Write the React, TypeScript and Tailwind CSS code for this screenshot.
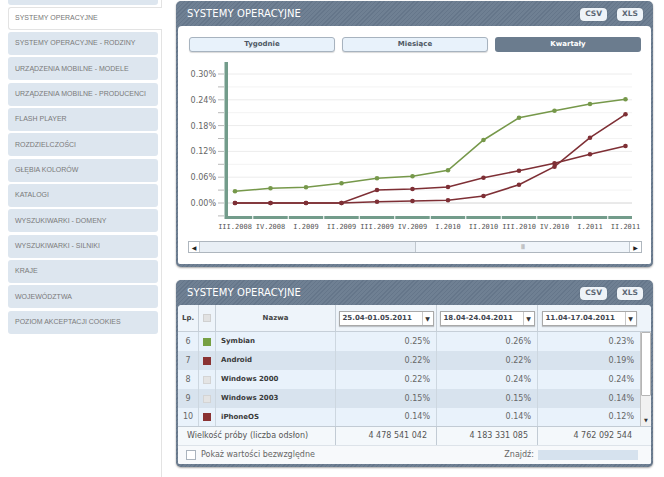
import React from "react";

const sidebarItems = [
  "SYSTEMY OPERACYJNE - RODZINY",
  "URZĄDZENIA MOBILNE - MODELE",
  "URZĄDZENIA MOBILNE - PRODUCENCI",
  "FLASH PLAYER",
  "ROZDZIELCZOŚCI",
  "GŁĘBIA KOLORÓW",
  "KATALOGI",
  "WYSZUKIWARKI - DOMENY",
  "WYSZUKIWARKI - SILNIKI",
  "KRAJE",
  "WOJEWÓDZTWA",
  "POZIOM AKCEPTACJI COOKIES",
];

const HATCH =
  "bg-[#68798b] bg-[repeating-linear-gradient(135deg,#65768a_0px,#65768a_1px,#6f8093_1px,#6f8093_3px)]";

const xs = [235, 270.5, 306, 341.5, 377, 412.5, 448, 483.5, 519, 554.5, 590, 625.5];
const cats = ["III.2008", "IV.2008", "I.2009", "II.2009", "III.2009", "IV.2009", "I.2010", "II.2010", "III.2010", "IV.2010", "I.2011", "II.2011"];
const green = [190.3, 187.3, 186.3, 182.3, 177.3, 175.3, 169.3, 139, 116.7, 109.7, 103, 98.3];
const red1 = [202, 202, 202, 202, 189, 188, 186, 176.7, 169.7, 162.3, 153.3, 145];
const red2 = [202, 202, 202, 202, 200.7, 200, 199.3, 195, 183.7, 165.7, 136.7, 113.3];

const majors = [73, 98.8, 124.6, 150.4, 176.2, 202];
const labels = ["0.30%", "0.24%", "0.18%", "0.12%", "0.06%", "0.00%"];

function Series({ ys, color }: { ys: number[]; color: string }) {
  const pts = xs.map((x, i) => `${x},${ys[i]}`).join(" ");
  return (
    <g>
      <polyline points={pts} fill="none" stroke={color} strokeWidth={1.6} />
      {xs.map((x, i) => (
        <circle key={i} cx={x} cy={ys[i]} r={2.3} fill={color} />
      ))}
    </g>
  );
}

function Chart() {
  const minors = majors.map((y) => y + 12.9);
  return (
    <svg width={460} height={182} viewBox="186 56 460 182" className="block ml-[8px] mt-[5px]">
      {majors.map((y) => (
        <line key={"g" + y} x1={228} x2={632} y1={y} y2={y} stroke={y === 202 ? "#d4d4d4" : "#ececec"} strokeWidth={1} />
      ))}
      {minors.slice(0, 5).map((y) => (
        <line key={"m" + y} x1={228} x2={632} y1={y} y2={y} stroke="#f3f3f3" strokeWidth={1} />
      ))}
      {[...majors, ...minors].map((y) => (
        <line key={"t" + y} x1={218} x2={224} y1={y} y2={y} stroke="#b9b9b9" strokeWidth={1} />
      ))}
      {labels.map((l, i) => (
        <text key={l} x={216} y={majors[i] + 3} textAnchor="end" fontSize={8} fill="#666" fontFamily="'DejaVu Sans', sans-serif">
          {l}
        </text>
      ))}
      <rect x={224.5} y={61} width={3.5} height={157} fill="#739c8b" />
      {xs.map((x, i) => {
        const a = i === 0 ? 225 : x - 17.2;
        const b = i === xs.length - 1 ? 632 : x + 17.2;
        return <rect key={"s" + i} x={a} y={215} width={b - a} height={3} fill="#739c8b" />;
      })}
      {cats.map((c, i) => (
        <text key={c} x={xs[i]} y={227.5} textAnchor="middle" fontSize={7} fill="#555" fontFamily="'DejaVu Sans Mono', monospace">
          {c}
        </text>
      ))}
      <Series ys={red2} color="#7e2f35" />
      <Series ys={red1} color="#7e2f35" />
      <Series ys={green} color="#76984a" />
    </svg>
  );
}

function SmallBtn({ label }: { label: string }) {
  return (
    <div className="h-[13px] px-[5px] flex items-center justify-center rounded-[4px] bg-[#eef3f8] text-[7.5px] font-bold text-[#5b6673] shadow-[0_0_1px_rgba(0,0,0,0.3)]">
      {label}
    </div>
  );
}

function PanelHeader() {
  return (
    <div className="h-[25px] flex items-center justify-between pl-[9px] pr-[8px]">
      <span className="text-[10px] text-white tracking-[0.1px]">SYSTEMY OPERACYJNE</span>
      <div className="flex gap-[10px] items-center mt-[1px]">
        <SmallBtn label="CSV" />
        <SmallBtn label="XLS" />
      </div>
    </div>
  );
}

function Tab({ label, active }: { label: string; active?: boolean }) {
  return active ? (
    <div className="w-[146px] h-[15px] rounded-[3px] bg-[#6b7c8e] flex items-center justify-center text-[7px] font-bold text-white">
      {label}
    </div>
  ) : (
    <div className="w-[146px] h-[15px] rounded-[3px] bg-[#e8f2fb] border border-[#a7b3bf] shadow-[0_1px_1px_rgba(0,0,0,0.15)] flex items-center justify-center text-[7px] font-bold text-[#4e5864]">
      {label}
    </div>
  );
}

function DateSelect({ label }: { label: string }) {
  return (
    <div className="mx-auto w-[95px] h-[15px] bg-white border border-[#a9a9a9] shadow-[0_1px_1px_rgba(0,0,0,0.2)] flex items-center">
      <span className="flex-1 pl-[3px] text-[7px] font-bold text-[#3f4650]">{label}</span>
      <span className="w-[11px] h-full border-l border-[#c8c8c8] flex items-center justify-center text-[6px] text-[#333]">▼</span>
    </div>
  );
}

const rows = [
  { lp: "6", name: "Symbian", color: "bg-[#76a043]", v: ["0.25%", "0.26%", "0.23%"] },
  { lp: "7", name: "Android", color: "bg-[#8a3232]", v: ["0.22%", "0.22%", "0.19%"] },
  { lp: "8", name: "Windows 2000", color: "", v: ["0.22%", "0.24%", "0.24%"] },
  { lp: "9", name: "Windows 2003", color: "", v: ["0.15%", "0.15%", "0.14%"] },
  { lp: "10", name: "iPhoneOS", color: "bg-[#8a3232]", v: ["0.14%", "0.14%", "0.12%"] },
];

function Table() {
  return (
    <div className="grid grid-cols-[21px_17px_120px_101px_101px_102px_11px] grid-rows-[27px_19px_19px_19px_19px_18px_19px_19px] text-[8px] text-[#666]">
      {/* header */}
      <div className="bg-[#eef4fa] border-b border-r border-[#c6cfd8] flex items-center justify-center text-[7px] font-bold text-[#444]">Lp.</div>
      <div className="bg-[#eef4fa] border-b border-r border-[#c6cfd8] flex items-center justify-center">
        <div className="w-[8px] h-[8px] bg-[#e2e2e2] border border-[#d0d0d0]" />
      </div>
      <div className="bg-[#eef4fa] border-b border-r border-[#c6cfd8] flex items-center justify-center text-[7px] font-bold text-[#444]">Nazwa</div>
      <div className="bg-[#eef4fa] border-b border-r border-[#c6cfd8] flex items-center">
        <DateSelect label="25.04-01.05.2011" />
      </div>
      <div className="bg-[#eef4fa] border-b border-r border-[#c6cfd8] flex items-center">
        <DateSelect label="18.04-24.04.2011" />
      </div>
      <div className="bg-[#eef4fa] border-b border-[#c6cfd8] flex items-center">
        <DateSelect label="11.04-17.04.2011" />
      </div>
      <div className="bg-[#eef4fa] border-b border-[#c6cfd8]" />

      {rows.map((r, i) => {
        const bg = i % 2 === 1 ? "bg-[#d8e3ee]" : "bg-[#e9f2fb]";
        return (
          <React.Fragment key={r.lp}>
            <div className={`${bg} border-r border-[#cdd7e0] flex items-center justify-center text-[#666]`} style={{ gridRow: i + 2, gridColumn: 1 }}>
              {r.lp}
            </div>
            <div className={`${bg} border-r border-[#cdd7e0] flex items-center justify-center`} style={{ gridRow: i + 2, gridColumn: 2 }}>
              {r.color ? (
                <div className={`w-[8px] h-[8px] ${r.color}`} />
              ) : (
                <div className="w-[8px] h-[8px] bg-[#e4e4e4] border border-[#d4d4d4]" />
              )}
            </div>
            <div className={`${bg} border-r border-[#cdd7e0] flex items-center pl-[5px] text-[7px] font-bold text-[#3a3a3a]`} style={{ gridRow: i + 2, gridColumn: 3 }}>
              {r.name}
            </div>
            {r.v.map((v, j) => (
              <div
                key={j}
                className={`${bg} ${j < 2 ? "border-r border-[#cdd7e0]" : ""} flex items-center justify-end pr-[6px]`}
                style={{ gridRow: i + 2, gridColumn: 4 + j }}
              >
                {v}
              </div>
            ))}
          </React.Fragment>
        );
      })}

      {/* scrollbar */}
      <div className="row-start-2 row-span-5 col-start-7 bg-[#f1f1f1] border-l border-[#c4c4c4] flex flex-col">
        <div className="h-[64px] bg-white border border-[#b5b5b5] rounded-[1px]" />
        <div className="flex-1" />
        <div className="h-[10px] flex items-center justify-center text-[5px] text-[#333]">▼</div>
      </div>

      {/* sample size */}
      <div className="row-start-7 col-start-1 col-span-3 bg-[#f4f8fb] border-t border-r border-[#c2cbd4] flex items-center pl-[9px] text-[#555]">
        Wielkość próby (liczba odsłon)
      </div>
      <div className="row-start-7 col-start-4 bg-[#f4f8fb] border-t border-r border-[#c2cbd4] flex items-center justify-end pr-[9px] text-[#555]">4 478 541 042</div>
      <div className="row-start-7 col-start-5 bg-[#f4f8fb] border-t border-r border-[#c2cbd4] flex items-center justify-end pr-[9px] text-[#555]">4 183 331 085</div>
      <div className="row-start-7 col-start-6 bg-[#f4f8fb] border-t border-[#c2cbd4] flex items-center justify-end pr-[8px] text-[#555]">4 762 092 544</div>
      <div className="row-start-7 col-start-7 bg-[#f4f8fb] border-t border-[#c2cbd4]" />

      {/* footer */}
      <div className="row-start-8 col-start-1 col-span-7 bg-[#f7f9fb] border-t border-[#dde3e9] flex items-center justify-between pl-[8px] pr-[13px]">
        <div className="flex items-center gap-[5px]">
          <div className="w-[10px] h-[10px] bg-white border border-[#aab3bd]" />
          <span className="text-[#666]">Pokaż wartości bezwzględne</span>
        </div>
        <div className="flex items-center gap-[4px]">
          <span className="text-[#666]">Znajdź:</span>
          <div className="w-[100px] h-[10px] bg-[#d6e2ee]" />
        </div>
      </div>
    </div>
  );
}

export default function App() {
  return (
    <div className="w-[664px] h-[477px] bg-white flex overflow-hidden font-['DejaVu_Sans',sans-serif]">
      {/* sidebar */}
      <div className="w-[162px] h-full border-r border-[#e3e3e3] flex flex-col font-['Liberation_Sans',sans-serif]">
        <div className="ml-[8px] mr-[3px] h-[5px] bg-[#dde6ef] rounded-b-[3px]" />
        <div className="mt-[2px] ml-[8px] -mr-[1px] h-[23px] bg-white border border-r-0 border-[#e3e3e3] rounded-l-[3px] flex items-center pl-[6px] text-[7px] text-[#777]">
          SYSTEMY OPERACYJNE
        </div>
        <div className="mt-[2px] ml-[8px] mr-[3px] flex flex-col gap-[2.35px]">
          {sidebarItems.map((s) => (
            <div key={s} className="h-[23px] bg-[#dde6ef] rounded-[3px] flex items-center pl-[7px] text-[7px] text-[#7a7a7a] whitespace-nowrap">
              {s}
            </div>
          ))}
        </div>
      </div>

      {/* main */}
      <div className="pl-[14px] flex flex-col gap-[13px] pt-[1px]">
        {/* panel 1 */}
        <div className={`w-[477px] rounded-[5px] ${HATCH} px-[2px] pb-[3px] shadow-[0_1px_2px_rgba(0,0,0,0.35)]`}>
          <PanelHeader />
          <div className="bg-white rounded-t-[4px] rounded-b-[2px] pb-[11px]">
            <div className="pt-[11px] pl-[11px] flex gap-[7px]">
              <Tab label="Tygodnie" />
              <Tab label="Miesiące" />
              <Tab label="Kwartały" active />
            </div>
            <Chart />
            <div className="mt-[2px] ml-[10px] w-[454px] h-[12px] border border-[#aeb6be] bg-[#e9eff5] flex items-stretch">
              <div className="w-[11px] bg-white border-r border-[#c4c9ce] flex items-center justify-center text-[6px] text-[#222]">◀</div>
              <div className="w-[215px]" />
              <div className="flex-1 bg-[#f0f5fa] border-l border-r border-[#c0c7ce] flex items-center justify-center text-[5px] text-[#999] tracking-[-1px]">|||||</div>
              <div className="w-[11px] bg-white flex items-center justify-center text-[6px] text-[#222]">▶</div>
            </div>
          </div>
        </div>

        {/* panel 2 */}
        <div className={`w-[477px] rounded-[5px] ${HATCH} px-[2px] pb-[3px] shadow-[0_1px_2px_rgba(0,0,0,0.35)]`}>
          <PanelHeader />
          <div className="bg-white rounded-t-[4px] rounded-b-[2px] overflow-hidden">
            <Table />
          </div>
        </div>
      </div>
    </div>
  );
}
